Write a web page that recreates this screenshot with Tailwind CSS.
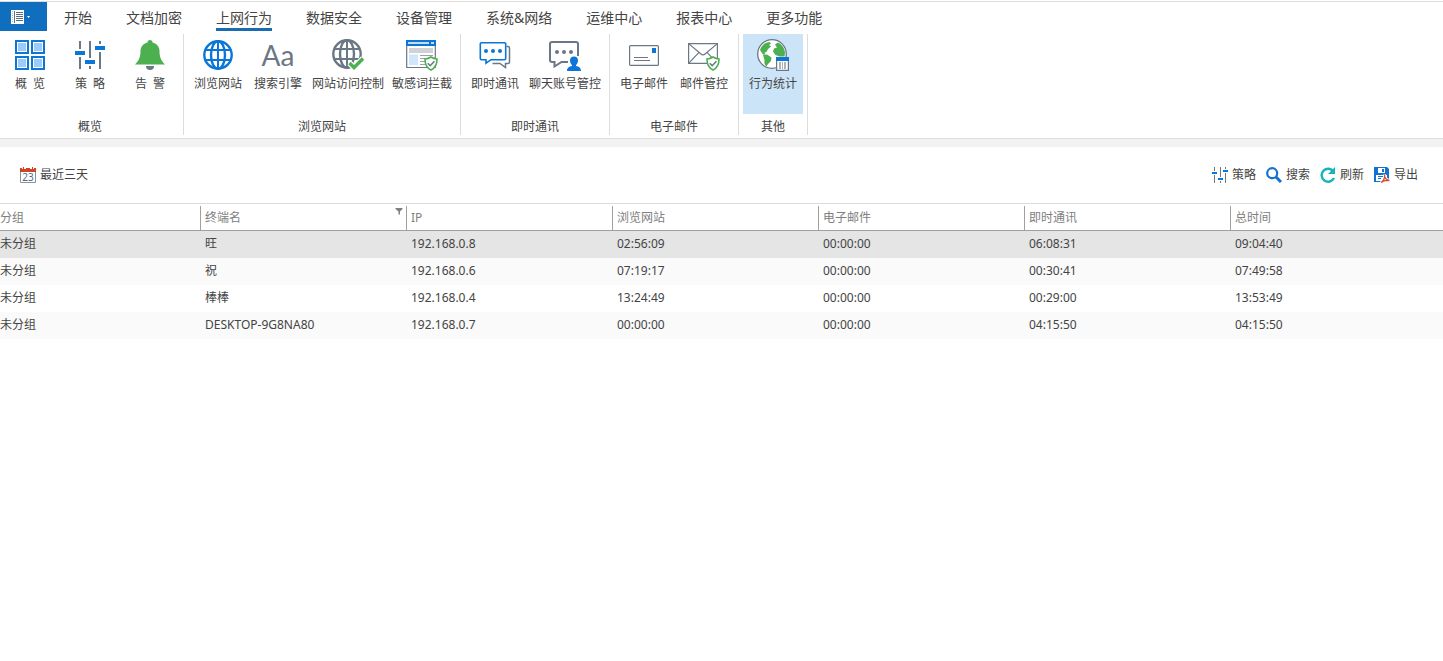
<!DOCTYPE html>
<html lang="zh-CN">
<head>
    <meta charset="UTF-8">
    <meta name="viewport" content="width=device-width, initial-scale=1.0">
    <title>上网行为 - 行为统计</title>
    <script src="https://cdn.jsdelivr.net/npm/@tailwindcss/browser@4"></script>
</head>
<body class="bg-white text-[#444444] text-xs font-['Noto_Sans','Noto_Sans_CJK_SC',sans-serif]">
    <!-- Shared icon shapes -->
    <svg class="hidden">
        <symbol id="shield" viewBox="0 0 14 15">
            <path d="M7 1C5.2 2.3 3.2 2.9 1 3c0 5 1.2 8.800 6 11 4.800-2.200 6-6 6-11-2.200-.1-4.200-.7-6-2z" fill="#fff" stroke="#4caf50" stroke-width="1.600"/>
            <path d="M3.800 7.300l2.400 2.400 4.200-4.400" fill="none" stroke="#6b7785" stroke-width="1.600"/>
        </symbol>
        <symbol id="globe" viewBox="0 0 30 30">
            <g fill="none" stroke="currentColor" stroke-width="2.400">
                <circle cx="15" cy="15" r="13.700"/>
                <ellipse cx="15" cy="15" rx="7" ry="13.700"/>
                <path d="M15 1v28M3 10h24M3 20h24" stroke-width="2"/>
            </g>
        </symbol>
    </svg>

    <header class="mt-px border-t border-[#dcdcdc]">
        <nav class="flex h-[29px] text-sm">
            <button class="flex w-[47px] items-center gap-[3px] bg-[#106ebe] pl-[11px]" aria-label="文件">
                <svg class="w-[13px] h-[14px]" viewBox="0 0 13 14">
                    <path d="M0 0h13v14H0z" fill="#fff"/>
                    <path d="M3.500 1v12" stroke="#5c7590"/>
                    <path d="M1 1.500h1M1 3.500h1M1 5.500h1M1 7.500h1M1 9.500h1M1 11.500h1" stroke="#b4c0cc"/>
                    <path d="M5 2.500h7M5 4.500h7M5 6.500h7M5 8.500h7M5 10.500h7" stroke="#5c6b7a"/>
                </svg>
                <svg class="w-[3px] h-[2px]" viewBox="0 0 3 2"><path d="M0 0h3L1.500 2z" fill="#fff"/></svg>
            </button>
            <button class="px-[17px]"><span class="block h-[29px] leading-8">开始</span></button>
            <button class="px-[17px]"><span class="block h-[29px] leading-8">文档加密</span></button>
            <button class="px-[17px]"><span class="block h-[29px] border-b-3 border-[#1a6cb0] leading-8">上网行为</span></button>
            <button class="px-[17px]"><span class="block h-[29px] leading-8">数据安全</span></button>
            <button class="px-[17px]"><span class="block h-[29px] leading-8">设备管理</span></button>
            <button class="px-[17px]"><span class="block h-[29px] leading-8">系统&amp;网络</span></button>
            <button class="px-[17px]"><span class="block h-[29px] leading-8">运维中心</span></button>
            <button class="px-[17px]"><span class="block h-[29px] leading-8">报表中心</span></button>
            <button class="px-[17px]"><span class="block h-[29px] leading-8">更多功能</span></button>
        </nav>

        <div class="flex pt-[3px] pb-[3px] leading-4 whitespace-nowrap">
            <section class="border-r border-[#dcdcdc] pr-[3px]">
                <div class="flex">
                    <button class="flex h-20 min-w-15 flex-col items-center gap-[5px] px-1 pt-[5px]">
                        <svg class="size-8" viewBox="0 0 32 32">
                            <g fill="#fff" stroke="#0b76d6" stroke-width="2">
                                <path d="M2 2h12v12H2zM18 2h12v12H18zM2 18h12v12H2zM18 18h12v12H18z"/>
                            </g>
                            <path d="M4 4h8v8H4zM20 4h8v8h-8zM4 20h8v8H4zM20 20h8v8h-8z" fill="#9bcbfb"/>
                        </svg>
                        <span>概&nbsp;&nbsp;览</span>
                    </button>
                    <button class="flex h-20 min-w-15 flex-col items-center gap-[5px] px-1 pt-[5px]">
                        <svg class="size-8" viewBox="0 0 32 32">
                            <path d="M6 2v8M6 18v12M16 2v17M16 27v3M26 2v3M26 13v17" stroke="#6b7785" stroke-width="2"/>
                            <path d="M1 12h10v4H1zM11 21h10v4H11zM21 7h10v4H21z" fill="#0b76d6"/>
                        </svg>
                        <span>策&nbsp;&nbsp;略</span>
                    </button>
                    <button class="flex h-20 min-w-15 flex-col items-center gap-[5px] px-1 pt-[5px]">
                        <svg class="size-8" viewBox="0 0 32 32">
                            <path d="M12 27h8a4 4 0 0 1-8 0z" fill="#6b7785"/>
                            <path d="M16 1a2.500 2.500 0 0 1 2.500 2.500C23 4.500 25.500 8 25.500 12c0 6 1.500 9.500 5.500 13.500H1C5 21.500 6.500 18 6.500 12c0-4 2.500-7.500 7-8.500A2.500 2.500 0 0 1 16 1z" fill="#4caf50"/>
                        </svg>
                        <span>告&nbsp;&nbsp;警</span>
                    </button>
                </div>
                <h2 class="pt-[5px] text-center">概览</h2>
            </section>

            <section class="border-r border-[#dcdcdc] px-1">
                <div class="flex">
                    <button class="flex h-20 min-w-15 flex-col items-center gap-[5px] px-1 pt-[5px]">
                        <svg class="size-8 text-[#0b76d6]" viewBox="0 0 32 32"><use href="#globe" x="1" y="1" width="30" height="30"/></svg>
                        <span>浏览网站</span>
                    </button>
                    <button class="flex h-20 min-w-15 flex-col items-center gap-[5px] px-1 pt-[5px]">
                        <span class="h-8 font-['Lato',sans-serif] text-[28px] leading-8 text-[#6b7785]" aria-hidden="true">Aa</span>
                        <span>搜索引擎</span>
                    </button>
                    <button class="flex h-20 min-w-15 flex-col items-center gap-[5px] px-1 pt-[5px]">
                        <svg class="size-8 text-[#6b7785]" viewBox="0 0 32 32">
                            <use href="#globe" width="30" height="30"/>
                            <path d="M17.500 24l4.500 4.500L31 19.500" fill="none" stroke="#fff" stroke-width="6"/>
                            <path d="M17.500 24l4.500 4.500L31 19.500" fill="none" stroke="#4caf50" stroke-width="3.400"/>
                        </svg>
                        <span>网站访问控制</span>
                    </button>
                    <button class="flex h-20 min-w-15 flex-col items-center gap-[5px] px-1 pt-[5px]">
                        <svg class="size-8" viewBox="0 0 32 32">
                            <path d="M.7 6v22.500h28.600V6" fill="#fff" stroke="#6b7785" stroke-width="1.200"/>
                            <path d="M0 1h30v6H0z" fill="#0b76d6"/>
                            <path d="M2 4h21M25 4h3" stroke="#fff" stroke-width="1.500"/>
                            <path d="M3 9h24v5H3z" fill="#d0d2d6"/>
                            <path d="M3 15.500h9V26H3z" fill="#cfe6fb"/>
                            <path d="M14 16.500h13M14 19.500h10M14 22.500h7M14 25.500h7" stroke="#9aa2ab"/>
                            <use href="#shield" x="18" y="17" width="14" height="15"/>
                        </svg>
                        <span>敏感词拦截</span>
                    </button>
                </div>
                <h2 class="pt-[5px] text-center">浏览网站</h2>
            </section>

            <section class="border-r border-[#dcdcdc] px-1">
                <div class="flex">
                    <button class="flex h-20 min-w-15 flex-col items-center gap-[5px] px-1 pt-[5px]">
                        <svg class="size-8" viewBox="0 0 32 32" fill="none">
                            <path d="M27.500 7.500H29A1.500 1.500 0 0 1 30.500 9v14A1.500 1.500 0 0 1 29 24.500h-2.500v4L21 24.500h-7.500" stroke="#6b7785" stroke-width="1.500"/>
                            <path d="M2.500 3.700h23A1.200 1.200 0 0 1 26.700 5v14.500a1.200 1.200 0 0 1-1.200 1.200H12L7 24.200v-3.500H2.500a1.200 1.200 0 0 1-1.200-1.200V5a1.200 1.200 0 0 1 1.200-1.300z" fill="#fff" stroke="#0b76d6" stroke-width="1.600"/>
                            <g fill="#0b76d6"><circle cx="7" cy="12" r="2"/><circle cx="14" cy="12" r="2"/><circle cx="21" cy="12" r="2"/></g>
                        </svg>
                        <span>即时通讯</span>
                    </button>
                    <button class="flex h-20 min-w-15 flex-col items-center gap-[5px] px-1 pt-[5px]">
                        <svg class="size-8" viewBox="0 0 32 32" fill="none">
                            <path d="M29 17V5a2 2 0 0 0-2-2H3a2 2 0 0 0-2 2v16a2 2 0 0 0 2 2h2.500v4.500L12.500 23H19" stroke="#6b7785" stroke-width="2"/>
                            <g fill="#6b7785"><circle cx="8" cy="13" r="2"/><circle cx="15" cy="13" r="2"/><circle cx="22" cy="13" r="2"/></g>
                            <path d="M25 17.500c2.500 0 4 1.500 4 4 0 1.800-.8 3.500-2 4.500v1c3 .6 5 1.800 5 5H18c0-3.200 2-4.400 5-5v-1c-1.200-1-2-2.700-2-4.500 0-2.500 1.500-4 4-4z" fill="#0b76d6"/>
                        </svg>
                        <span>聊天账号管控</span>
                    </button>
                </div>
                <h2 class="pt-[5px] text-center">即时通讯</h2>
            </section>

            <section class="border-r border-[#dcdcdc] px-1">
                <div class="flex">
                    <button class="flex h-20 min-w-15 flex-col items-center gap-[5px] px-1 pt-[5px]">
                        <svg class="size-8" viewBox="0 0 32 32">
                            <rect x="1.600" y="6.600" width="28.800" height="19.800" rx="1" fill="#fff" stroke="#6b7785" stroke-width="1.200"/>
                            <path d="M24 9h4v5h-4z" fill="#0b76d6"/>
                            <path d="M6 18.500h14M6 21.500h16" stroke="#6b7785"/>
                        </svg>
                        <span>电子邮件</span>
                    </button>
                    <button class="flex h-20 min-w-15 flex-col items-center gap-[5px] px-1 pt-[5px]">
                        <svg class="size-8" viewBox="0 0 32 32">
                            <g fill="none" stroke="#6b7785" stroke-width="1.200">
                                <path d="M.6 4.600h28.800v19.800H.6z"/>
                                <path d="M.6 4.600l12.400 10.400a3 3 0 0 0 4 0L29.400 4.600M.6 24.400l10.400-11M29.400 24.400L19 13.400"/>
                            </g>
                            <use href="#shield" x="18" y="17" width="14" height="15"/>
                        </svg>
                        <span>邮件管控</span>
                    </button>
                </div>
                <h2 class="pt-[5px] text-center">电子邮件</h2>
            </section>

            <section class="border-r border-[#dcdcdc] px-1">
                <div class="flex">
                    <button class="flex h-20 min-w-15 flex-col items-center gap-[5px] bg-[#cce4f7] px-1 pt-[5px]">
                        <svg class="size-8" viewBox="0 0 32 32">
                            <circle cx="15" cy="15" r="14.300" fill="#fff" stroke="#6b7785" stroke-width="1.300"/>
                            <path d="M3 11C4.500 6.500 8 3.500 12.500 3l1.500 1.500-2 1.500 2 1.500-3 2.500-1.500 3-2 .5 1 2H6z" fill="#4caf50"/>
                            <path d="M6 16l4-.5 4.500 3-.5 3.500-3 3-1.500 2.500-2-2.500V21z" fill="#4caf50"/>
                            <path d="M18 5.500l3-2C25 5.500 27.500 9 28 13.500l-.5 4h-5L18.500 16 16 12.500l1-3 3-1z" fill="#4caf50"/>
                            <path d="M19.600 18.600h11.800v12.800H19.600z" fill="#fff" stroke="#6b7785" stroke-width="1.200"/>
                            <path d="M19 18h13v4H19z" fill="#0b76d6"/>
                            <path d="M22 23h2v7h-2zM25 23h1v7h-1zM27 23h2v7h-2z" fill="#aeb4bb"/>
                        </svg>
                        <span>行为统计</span>
                    </button>
                </div>
                <h2 class="pt-[5px] text-center">其他</h2>
            </section>
        </div>
        <div class="h-[9px] border-t border-[#dcdcdc] bg-[#f2f2f2]"></div>
    </header>

    <main>
        <div class="flex h-14 items-center justify-between pr-[25px] pl-5 leading-4">
            <button class="flex items-center gap-1">
                <svg class="size-4" viewBox="0 0 16 16">
                    <path d="M.5 3.500h15v12H.5z" fill="#fff" stroke="#8a94a0"/>
                    <path d="M0 1h2v1h1V0h1v2h2V1h4v1h2V0h1v2h1V1h2v4H0z" fill="#d04325"/>
                    <text x="8" y="14" text-anchor="middle" font-family="Noto Sans" font-size="10" fill="#4d6a86">23</text>
                </svg>
                <span>最近三天</span>
            </button>
            <div class="flex gap-[10px]">
                <button class="flex items-center gap-1">
                    <svg class="size-4" viewBox="0 0 16 16">
                        <path d="M2.500 0v4M2.500 8v8M8.500 0v10M8.500 14v2M13.500 0v2M13.500 6v10" stroke="#6b7785"/>
                        <path d="M0 5h5v2H0zM6 11h5v2H6zM11 3h5v2h-5z" fill="#0b76d6"/>
                    </svg>
                    <span>策略</span>
                </button>
                <button class="flex items-center gap-1">
                    <svg class="size-4" viewBox="0 0 16 16" fill="none" stroke="#1273cf">
                        <circle cx="6.200" cy="6.200" r="5" stroke-width="2.200"/>
                        <path d="M10 10l5 5" stroke-width="3"/>
                    </svg>
                    <span>搜索</span>
                </button>
                <button class="flex items-center gap-1">
                    <svg class="size-4" viewBox="0 0 16 16">
                        <path d="M13.500 4.500A6.500 6.500 0 1 0 14 11" fill="none" stroke="#16b5b5" stroke-width="2.400"/>
                        <path d="M15 0v7H8z" fill="#16b5b5"/>
                    </svg>
                    <span>刷新</span>
                </button>
                <button class="flex items-center gap-1">
                    <svg class="size-4" viewBox="0 0 16 16">
                        <path d="M0 0h13l2 2v13H0z" fill="#1273cf"/>
                        <path d="M4 1h7v5H4zM2 8h11v6H2z" fill="#fff"/>
                        <path d="M8 2h2v3H8z" fill="#1273cf"/>
                        <path d="M4 9.500h5M4 11.500h3" stroke="#1273cf"/>
                        <path d="M7 15.500c2.500-1.500 4-4.500 3.500-8C10.500 11 12 13 15.500 13.500c-3-.5-6 0-8.500 2z" fill="none" stroke="#fff" stroke-width="3"/>
                        <path d="M7 15.500c2.500-1.500 4-4.500 3.500-8C10.500 11 12 13 15.500 13.500c-3-.5-6 0-8.500 2z" fill="none" stroke="#dd4b2a" stroke-width="1.300"/>
                    </svg>
                    <span>导出</span>
                </button>
            </div>
        </div>

        <table class="w-full table-fixed border-t border-[#dcdcdc] text-left leading-4">
            <colgroup>
                <col class="w-[200px]">
                <col class="w-[206px]">
                <col class="w-[206px]">
                <col class="w-[206px]">
                <col class="w-[206px]">
                <col class="w-[206px]">
                <col>
            </colgroup>
            <thead class="border-b border-[#a0a0a0] text-[#808080]">
                <tr>
                    <th class="h-[27px] p-0 pt-[2px] font-normal">分组</th>
                    <th class="p-0 pt-[2px] font-normal">
                        <div class="flex justify-between border-l border-[#a0a0a0] pl-1 leading-6">
                            终端名
                            <svg class="mt-[2px] mr-[3px] size-2" viewBox="0 0 8 8"><path d="M.5 0h7v1L5 3.500v3H3.500v-3L.5 1z" fill="#808080"/></svg>
                        </div>
                    </th>
                    <th class="p-0 pt-[2px] font-normal"><div class="border-l border-[#a0a0a0] pl-1 leading-6">IP</div></th>
                    <th class="p-0 pt-[2px] font-normal"><div class="border-l border-[#a0a0a0] pl-1 leading-6">浏览网站</div></th>
                    <th class="p-0 pt-[2px] font-normal"><div class="border-l border-[#a0a0a0] pl-1 leading-6">电子邮件</div></th>
                    <th class="p-0 pt-[2px] font-normal"><div class="border-l border-[#a0a0a0] pl-1 leading-6">即时通讯</div></th>
                    <th class="p-0 pt-[2px] font-normal"><div class="border-l border-[#a0a0a0] pl-1 leading-6">总时间</div></th>
                </tr>
            </thead>
            <tbody id="stats-list">
                <!-- Rows are filled in below -->
            </tbody>
        </table>
    </main>

    <script>
        const stats = [
            ["未分组", "旺", "192.168.0.8", "02:56:09", "00:00:00", "06:08:31", "09:04:40"],
            ["未分组", "祝", "192.168.0.6", "07:19:17", "00:00:00", "00:30:41", "07:49:58"],
            ["未分组", "棒棒", "192.168.0.4", "13:24:49", "00:00:00", "00:29:00", "13:53:49"],
            ["未分组", "DESKTOP-9G8NA80", "192.168.0.7", "00:00:00", "00:00:00", "04:15:50", "04:15:50"]
        ];
        const selected = 0;

        function rowColor(index) {
            if (index === selected) return "bg-[#e5e5e5]";
            return index % 2 ? "bg-[#fafafa]" : "bg-white";
        }

        function loadStats() {
            document.getElementById("stats-list").innerHTML = stats.map((row, index) => `
                <tr class="h-[27px] ${rowColor(index)}">
                    ${row.map((cell, i) => `<td class="p-0 ${i ? "pl-[5px]" : ""}">${cell}</td>`).join("")}
                </tr>
            `).join("");
        }

        document.addEventListener("DOMContentLoaded", loadStats);
    </script>
</body>
</html>
